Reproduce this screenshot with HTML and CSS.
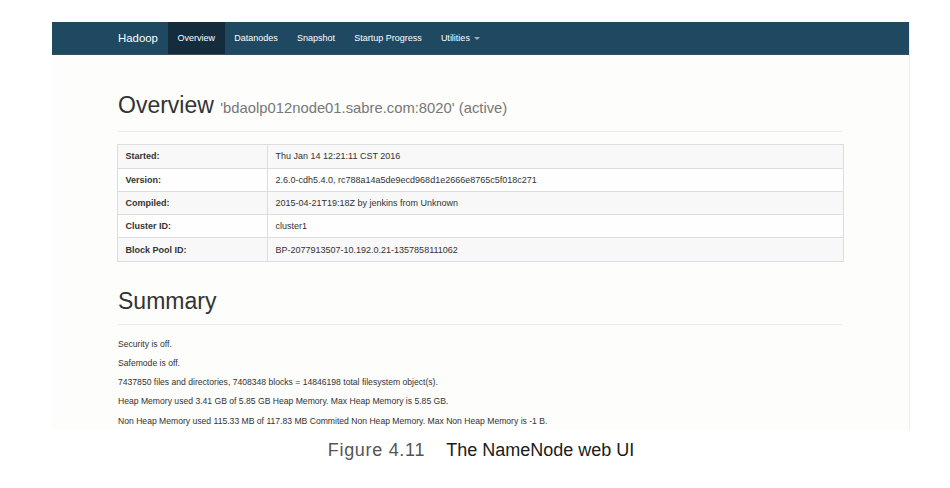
FILE: index.html
```html
<!DOCTYPE html>
<html>
<head>
<meta charset="utf-8">
<link rel="stylesheet" href="styles.css">
</head>
<body>
<div class="shot">
  <nav class="navbar">
    <span class="brand">Hadoop</span>
    <a class="nav-item active">Overview</a>
    <a class="nav-item">Datanodes</a>
    <a class="nav-item">Snapshot</a>
    <a class="nav-item">Startup Progress</a>
    <a class="nav-item">Utilities <span class="caret"></span></a>
  </nav>
  <div class="main">
    <div class="page-header">
      <h1>Overview <small>'bdaolp012node01.sabre.com:8020' (active)</small></h1>
    </div>
    <table class="info">
      <tr><th>Started:</th><td>Thu Jan 14 12:21:11 CST 2016</td></tr>
      <tr><th>Version:</th><td>2.6.0-cdh5.4.0, rc788a14a5de9ecd968d1e2666e8765c5f018c271</td></tr>
      <tr><th>Compiled:</th><td>2015-04-21T19:18Z by jenkins from Unknown</td></tr>
      <tr><th>Cluster ID:</th><td>cluster1</td></tr>
      <tr><th>Block Pool ID:</th><td>BP-2077913507-10.192.0.21-1357858111062</td></tr>
    </table>
    <div class="page-header summary">
      <h1>Summary</h1>
    </div>
    <div class="paras">
      <p>Security is off.</p>
      <p>Safemode is off.</p>
      <p>7437850 files and directories, 7408348 blocks = 14846198 total filesystem object(s).</p>
      <p>Heap Memory used 3.41 GB of 5.85 GB Heap Memory. Max Heap Memory is 5.85 GB.</p>
      <p>Non Heap Memory used 115.33 MB of 117.83 MB Commited Non Heap Memory. Max Non Heap Memory is -1 B.</p>
    </div>
  </div>
</div>
<div class="caption">
  <span class="fig">Figure 4.11</span><span class="title">The NameNode web UI</span>
</div>
</body>
</html>
```
FILE: styles.css
```css
html, body {
  margin: 0;
  padding: 0;
  background: #ffffff;
}
body {
  font-family: "Liberation Sans", Arial, sans-serif;
  color: #333;
}
.shot {
  margin: 22px 0 0 52px;
  width: 857px;
  height: 408px;
  background: #fdfdfc;
  border-right: 1px solid #ececec;
  overflow: hidden;
}
.navbar {
  height: 33px;
  background: #1f4861;
  border-bottom: 1px solid #3a4f5c;
  box-sizing: border-box;
  display: flex;
  align-items: stretch;
  padding-left: 66px;
}
.brand {
  color: #fff;
  font-size: 11.4px;
  line-height: 33px;
  margin-right: 10px;
}
.nav-item {
  color: #fff;
  font-size: 9px;
  line-height: 33px;
  padding: 0 9.6px;
  display: flex;
  align-items: center;
}
.nav-item.active {
  background: #152c3d;
}
.caret {
  display: inline-block;
  width: 0;
  height: 0;
  margin-left: 4px;
  border-top: 3px solid #9fb0bc;
  border-left: 3px solid transparent;
  border-right: 3px solid transparent;
}
.main {
  padding: 0 66px 0 65px;
}
.page-header {
  margin-top: 38px;
  padding-bottom: 10px;
  border-bottom: 1px solid #eeeeee;
  padding-left: 1px;
}
.page-header h1 {
  margin: 0;
  font-size: 23px;
  font-weight: normal;
  line-height: 25.3px;
  color: #333;
}
.page-header small {
  font-size: 14.8px;
  color: #777;
}
.page-header.summary {
  margin-top: 27px;
}
.info {
  margin-top: 12px;
  width: 727px;
  border-collapse: collapse;
  border: 1px solid #dddddd;
  font-size: 9px;
}
.info th, .info td {
  border: 1px solid #dddddd;
  height: 22.3px;
  padding: 0 7.5px;
  text-align: left;
  color: #333;
}
.info th {
  width: 134px;
  font-weight: bold;
}
.info tr:nth-child(odd) {
  background: #f8f8f8;
}
.info tr:nth-child(even) {
  background: #fefefe;
}
.paras {
  margin-top: 12.5px;
  padding-left: 1px;
}
.paras p {
  margin: 0 0 6.5px 0;
  font-size: 8.6px;
  line-height: 12.8px;
  color: #333;
}
.caption {
  margin-top: 10px;
  height: 20px;
  display: flex;
  justify-content: center;
  padding-left: 12px;
  font-family: "Liberation Sans", Arial, sans-serif;
  font-size: 18px;
  line-height: 20px;
}
.caption .fig {
  color: #555;
  letter-spacing: 0.7px;
  margin-right: 21px;
}
.caption .title {
  color: #1a1a1a;
}
```
